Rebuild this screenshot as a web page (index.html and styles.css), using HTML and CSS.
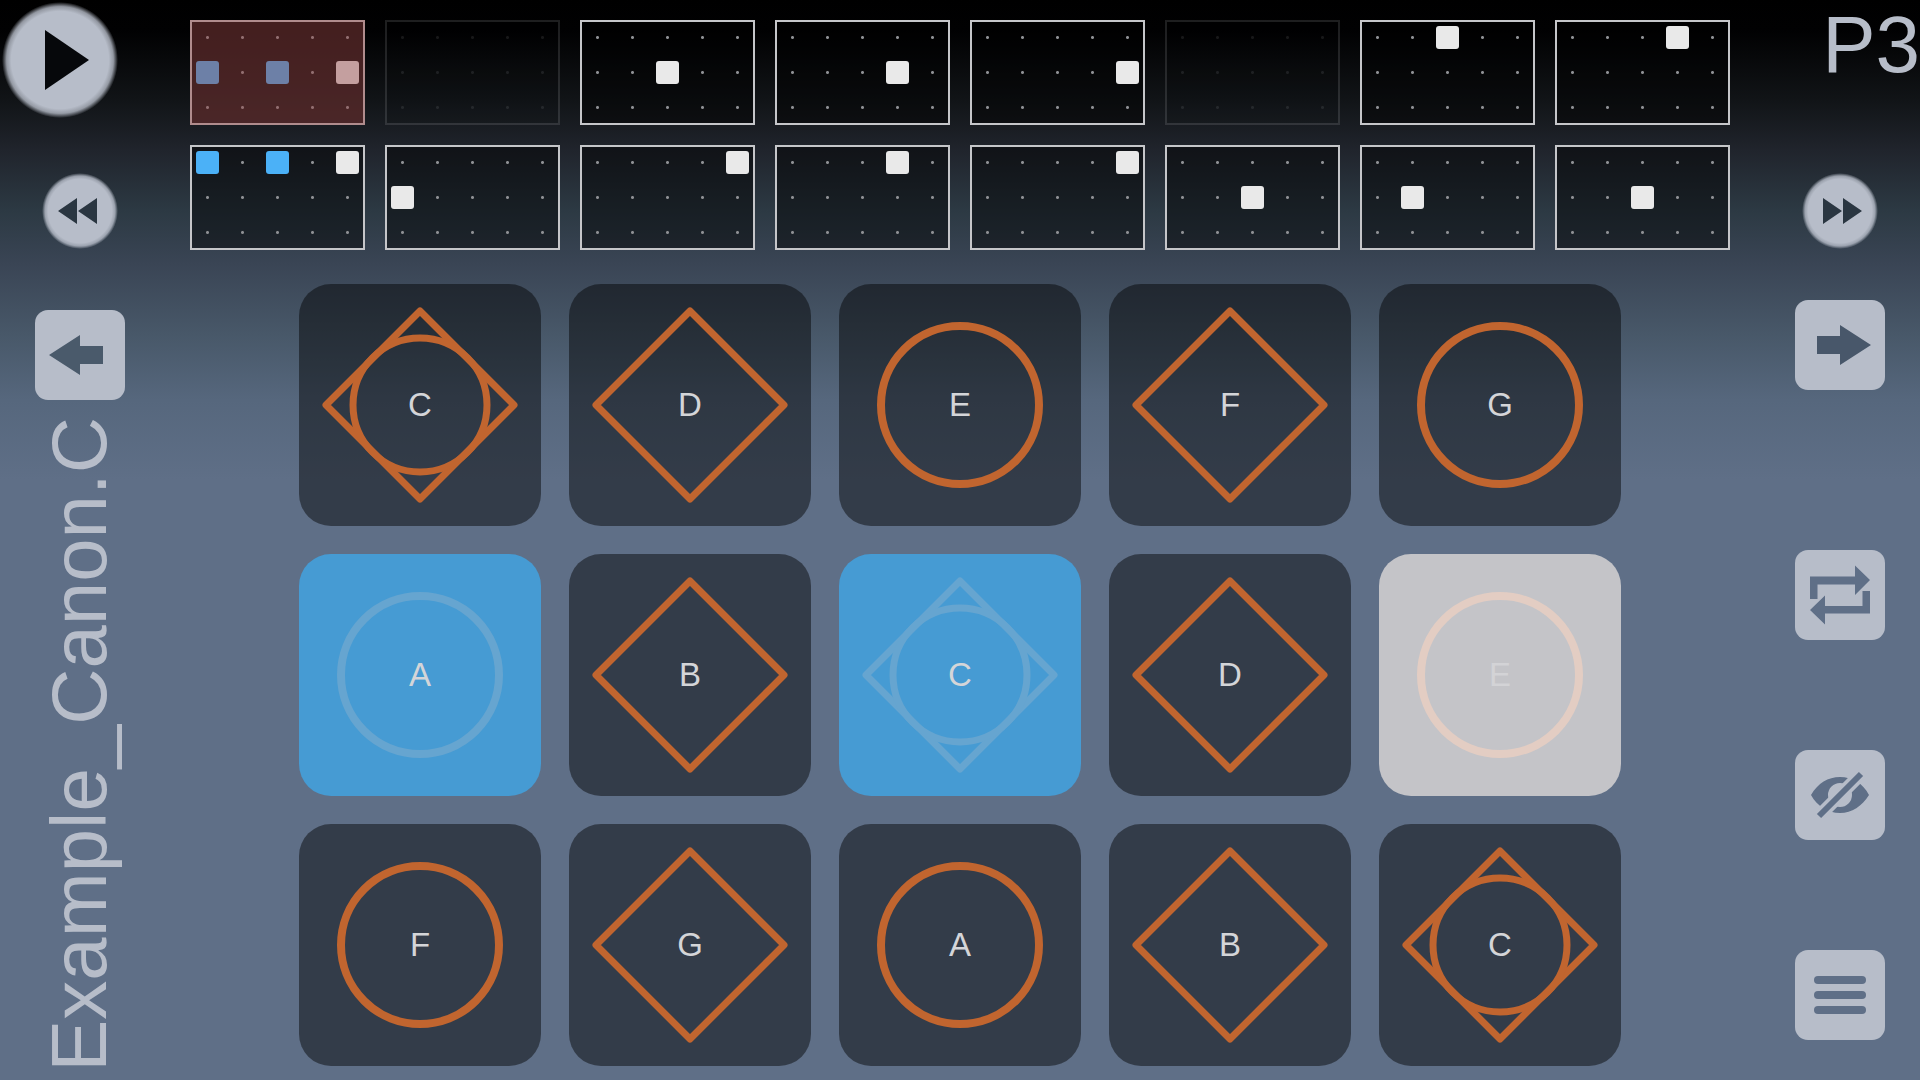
FILE: index.html
```html
<!DOCTYPE html>
<html lang="en">
<head>
    <meta charset="UTF-8">
    <title>Example_Canon.C</title>
    <link rel="stylesheet" href="styles.css">
</head>
<body>
<!-- shared pad shapes -->
<svg class="defs" aria-hidden="true">
    <symbol id="circle" viewBox="0 0 242 242">
        <circle cx="121" cy="121" r="79" stroke-width="8"/>
    </symbol>
    <symbol id="diamond" viewBox="0 0 242 242">
        <path d="M121 27L215 121L121 215L27 121Z" stroke-width="7"/>
    </symbol>
    <symbol id="root" viewBox="0 0 242 242">
        <path d="M121 27L215 121L121 215L27 121Z" stroke-width="7"/>
        <circle cx="121" cy="121" r="67" stroke-width="7"/>
    </symbol>
</svg>

<div class="player">
    <div class="side side-left">
        <button class="round play" aria-label="Play">
            <svg viewBox="0 0 116 116"><path d="M43 28L87 58L43 88Z"/></svg>
        </button>
        <button class="round skip" aria-label="Rewind">
            <svg viewBox="0 0 76 76"><path d="M16 38L35 25V51ZM36 38L55 25V51Z"/></svg>
        </button>
        <button class="square prev" aria-label="Previous song">
            <svg viewBox="0 0 90 90"><path d="M14 45L45 25V36H68V54H45V65Z"/></svg>
        </button>
        <h1 class="song">Example_Canon.C</h1>
    </div>

    <div class="main">
        <div class="sequence">
            <div class="frame current">
                <i class="blue r2 c1"></i><i class="blue r2 c3"></i><i class="r2 c5"></i>
            </div>
            <div class="frame rest"></div>
            <div class="frame"><i class="r2 c3"></i></div>
            <div class="frame"><i class="r2 c4"></i></div>
            <div class="frame"><i class="r2 c5"></i></div>
            <div class="frame rest"></div>
            <div class="frame"><i class="r1 c3"></i></div>
            <div class="frame"><i class="r1 c4"></i></div>
            <div class="frame">
                <i class="blue r1 c1"></i><i class="blue r1 c3"></i><i class="r1 c5"></i>
            </div>
            <div class="frame"><i class="r2 c1"></i></div>
            <div class="frame"><i class="r1 c5"></i></div>
            <div class="frame"><i class="r1 c4"></i></div>
            <div class="frame"><i class="r1 c5"></i></div>
            <div class="frame"><i class="r2 c3"></i></div>
            <div class="frame"><i class="r2 c2"></i></div>
            <div class="frame"><i class="r2 c3"></i></div>
        </div>

        <div class="pads">
            <button class="pad"><svg><use href="#root"/></svg><span>C</span></button>
            <button class="pad"><svg><use href="#diamond"/></svg><span>D</span></button>
            <button class="pad"><svg><use href="#circle"/></svg><span>E</span></button>
            <button class="pad"><svg><use href="#diamond"/></svg><span>F</span></button>
            <button class="pad"><svg><use href="#circle"/></svg><span>G</span></button>

            <button class="pad pad-blue"><svg><use href="#circle"/></svg><span>A</span></button>
            <button class="pad"><svg><use href="#diamond"/></svg><span>B</span></button>
            <button class="pad pad-blue"><svg><use href="#root"/></svg><span>C</span></button>
            <button class="pad"><svg><use href="#diamond"/></svg><span>D</span></button>
            <button class="pad pad-white"><svg><use href="#circle"/></svg><span>E</span></button>

            <button class="pad"><svg><use href="#circle"/></svg><span>F</span></button>
            <button class="pad"><svg><use href="#diamond"/></svg><span>G</span></button>
            <button class="pad"><svg><use href="#circle"/></svg><span>A</span></button>
            <button class="pad"><svg><use href="#diamond"/></svg><span>B</span></button>
            <button class="pad"><svg><use href="#root"/></svg><span>C</span></button>
        </div>
    </div>

    <div class="side side-right">
        <div class="page">P3</div>
        <button class="round skip" aria-label="Fast forward">
            <svg viewBox="0 0 76 76"><path d="M60 38L41 25V51ZM40 38L21 25V51Z"/></svg>
        </button>
        <button class="square next" aria-label="Next song">
            <svg viewBox="0 0 90 90"><path d="M76 45L45 25V36H22V54H45V65Z"/></svg>
        </button>
        <div class="tools">
            <button class="square" aria-label="Repeat">
                <svg viewBox="0 0 90 90">
                    <path d="M15 26.5H60V15.5L75 30L60 45V34.5H22.5V49H15Z"/>
                    <path d="M75 63.5H30V74.5L15 60L30 45.5V56H67.5V41H75Z"/>
                </svg>
            </button>
            <button class="square" aria-label="Hide notes">
                <svg viewBox="0 0 90 90">
                    <path fill-rule="evenodd" d="M16 45C23 33 33 27 45 27C57 27 68 33 74 45C67 56 57 63 45 63C33 63 22 56 16 45ZM45 33A12 12 0 1 0 45 57A12 12 0 1 0 45 33Z"/>
                    <path class="gap" d="M20 70L70 20"/>
                    <path class="slash" d="M24 66L66 24"/>
                </svg>
            </button>
            <button class="square" aria-label="Menu">
                <svg viewBox="0 0 90 90">
                    <rect x="19" y="26" width="52" height="8" rx="4"/>
                    <rect x="19" y="41" width="52" height="8" rx="4"/>
                    <rect x="19" y="56" width="52" height="8" rx="4"/>
                </svg>
            </button>
        </div>
    </div>
</div>
</body>
</html>
```
FILE: styles.css
```css
* {
    margin: 0;
    padding: 0;
    box-sizing: border-box;
}

body {
    background: #5f6f87 linear-gradient(#000 0, #010102 30px, #111417 100px, #20242c 150px, #2c3943 210px, #3a4555 265px, #485869 335px, #56677d 400px, #5f6f87 480px) no-repeat;
    color: #b7bdc9;
    font-family: "Liberation Sans", Arial, sans-serif;
}

button {
    border: 0;
    background: none;
    font: inherit;
    cursor: pointer;
}

svg {
    display: block;
    width: 100%;
    height: 100%;
}

.defs {
    position: absolute;
    width: 0;
    height: 0;
}

.player {
    display: flex;
    min-height: 100vh;
}

/* side columns */
.side {
    display: flex;
    flex-direction: column;
    flex: 0 0 190px;
}

.side-left {
    align-items: flex-start;
    padding: 2px 0 8px 2px;
}

.side-right {
    align-items: flex-end;
}

.round {
    border-radius: 50%;
    background: radial-gradient(closest-side, #b7bdc9 84%, rgba(183, 189, 201, .8) 92%, rgba(183, 189, 201, 0) 100%);
}

.play {
    width: 116px;
    height: 116px;
    fill: #06080b;
}

.skip {
    width: 76px;
    height: 76px;
    fill: #2a3641;
}

.side-left .skip {
    margin: 55px 0 0 40px;
}

.side-right .skip {
    margin: 83px 42px 0 0;
}

.square {
    width: 90px;
    height: 90px;
    border-radius: 13px;
    background: #b7bdc9;
    fill: #5f6f87;
}

.prev {
    margin: 61px 0 0 33px;
    fill: #4a5a6b;
}

.next {
    margin: 51px 35px 0 0;
    fill: #48576a;
}

.tools {
    display: flex;
    flex-direction: column;
    gap: 110px;
    margin: 160px 35px 0 0;
}

.gap {
    stroke: #b7bdc9;
    stroke-width: 13;
}

.slash {
    stroke: #5f6f87;
    stroke-width: 6;
}

.song {
    margin: auto 0 0 33px;
    writing-mode: vertical-rl;
    transform: rotate(180deg);
    font-size: 78px;
    font-weight: normal;
    line-height: 88px;
    white-space: nowrap;
}

.page {
    font-size: 80px;
    line-height: 90px;
}

/* sequence */
.main {
    flex: 1;
    padding: 20px 0 14px;
}

.sequence {
    display: grid;
    grid-template-columns: repeat(8, 1fr);
    gap: 20px;
}

.frame {
    display: grid;
    grid-template: repeat(3, 1fr) / repeat(5, 1fr);
    place-items: center;
    position: relative;
    aspect-ratio: 5 / 3;
    background: radial-gradient(circle, #8e9094 1px, rgba(142, 144, 148, 0) 2px) 0 0 / 20% 33.33%, rgba(0, 0, 0, .45);
    box-shadow: inset 0 0 0 2px #c5c6c9;
}

.frame i {
    width: 64%;
    height: 64%;
    border-radius: 3px;
    background: #e9e9e9;
}

.frame .blue {
    background: #4bb1f7;
}

.rest {
    opacity: .15;
}

/* red veil over the frame being played */
.current::after {
    content: "";
    position: absolute;
    inset: 0;
    background: rgba(150, 68, 68, .45);
}

.r1 { grid-row: 1; }
.r2 { grid-row: 2; }

.c1 { grid-column: 1; }
.c2 { grid-column: 2; }
.c3 { grid-column: 3; }
.c4 { grid-column: 4; }
.c5 { grid-column: 5; }

/* pads */
.pads {
    display: grid;
    grid-template-columns: repeat(5, 1fr);
    gap: 28px;
    padding: 34px 109px 0;
}

.pad {
    display: grid;
    place-items: center;
    aspect-ratio: 1;
    border-radius: 32px;
    background: rgba(0, 0, 0, .46);
    color: #d4d5d8;
    font-size: 33px;
    stroke: #c1652f;
    stroke-linejoin: round;
    fill: none;
}

.pad svg, .pad span {
    grid-area: 1 / 1;
}

.pad-blue {
    background: #469bd3;
    stroke: #66a5d0;
}

.pad-white {
    background: #c4c4c8;
    color: #d3d3d6;
    stroke: #e3cdc3;
}
```
